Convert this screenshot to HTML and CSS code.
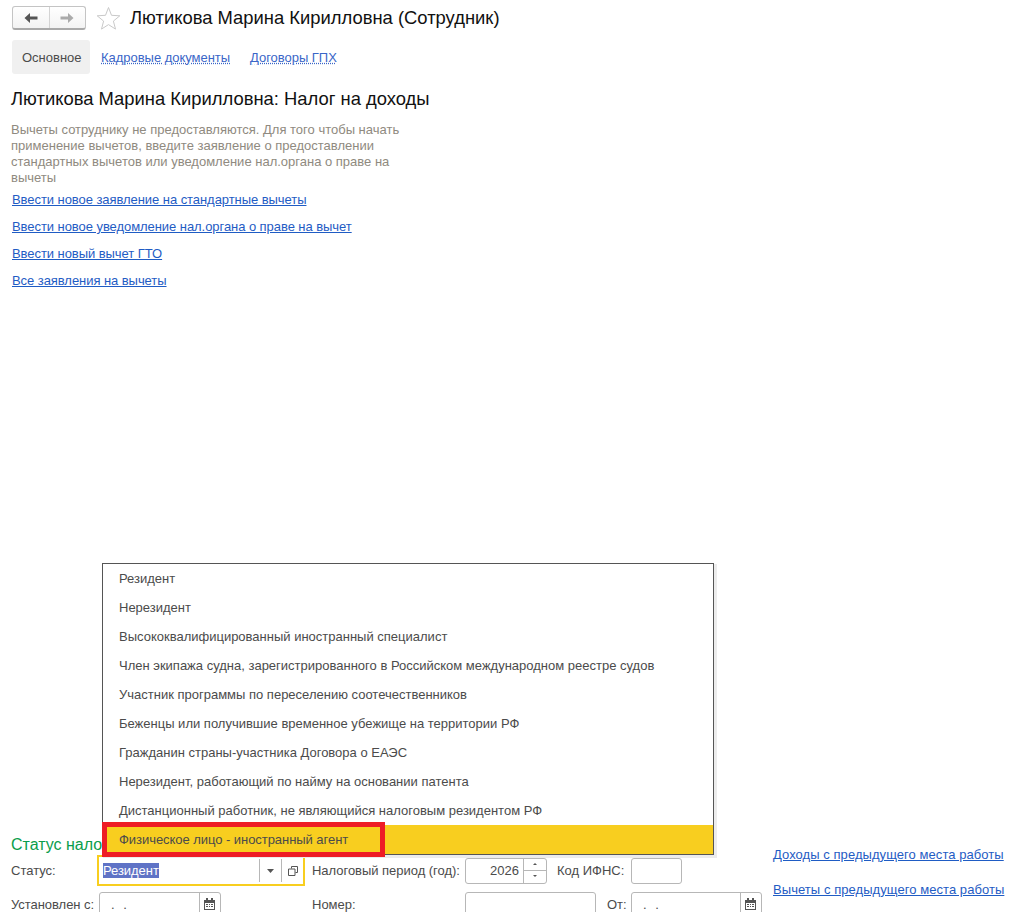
FILE: index.html
```html
<!DOCTYPE html>
<html lang="ru">
<head>
<meta charset="utf-8">
<title>Лютикова Марина Кирилловна (Сотрудник)</title>
<link rel="stylesheet" href="styles.css">
</head>
<body>
<div class="page">
  <header class="head">
    <div class="nav">
      <button class="nav-btn nav-back" type="button" aria-label="Назад">
        <svg width="16" height="12" viewBox="0 0 16 12"><path d="M7 1 1.500 6 7 11V7.500h7.500v-3H7z" fill="#555"/></svg>
      </button>
      <button class="nav-btn" type="button" aria-label="Вперёд">
        <svg width="16" height="12" viewBox="0 0 16 12"><path d="M9 1l5.500 5L9 11V7.500H1.500v-3H9z" fill="#aaa"/></svg>
      </button>
    </div>
    <svg class="star" width="25" height="24" viewBox="0 0 25 24"><path d="M12.500 1.500l3 7.800 8.300.5-6.400 5.300 2.100 8-7-4.500-7 4.500 2.100-8L1.200 9.800l8.300-.5z" fill="#fff" stroke="#c9c9c9"/></svg>
    <h1 class="title">Лютикова Марина Кирилловна (Сотрудник)</h1>
  </header>
  <nav class="tabs">
    <span class="tab tab-active">Основное</span>
    <a class="tab-link" href="#">Кадровые документы</a>
    <a class="tab-link" href="#">Договоры ГПХ</a>
  </nav>
  <h2 class="subtitle">Лютикова Марина Кирилловна: Налог на доходы</h2>
  <p class="hint">Вычеты сотруднику не предоставляются. Для того чтобы начать применение вычетов, введите заявление о предоставлении стандартных вычетов или уведомление нал.органа о праве на вычеты</p>
  <ul class="links">
    <li><a href="#">Ввести новое заявление на стандартные вычеты</a></li>
    <li><a href="#">Ввести новое уведомление нал.органа о праве на вычет</a></li>
    <li><a href="#">Ввести новый вычет ГТО</a></li>
    <li><a href="#">Все заявления на вычеты</a></li>
  </ul>

  <section class="tax">
    <div class="tax-main">
      <h3 class="tax-title">Статус налогоплательщика</h3>
      <div class="row">
        <label class="lbl lbl-status">Статус:</label>
        <div class="field field-status">
          <span class="value"><span class="selected">Резидент</span></span>
          <span class="cell cell-inset">
            <svg width="7" height="4" viewBox="0 0 7 4"><path d="M0 0h7L3.500 4z" fill="#555"/></svg>
          </span>
          <span class="cell cell-inset">
            <svg width="10" height="10" viewBox="0 0 10 10"><path d="M3.500 2.500V.5h6v6h-2M.5 3h6.500v6.500H.5z" fill="none" stroke="#555"/></svg>
          </span>
        </div>
        <label class="lbl lbl-period">Налоговый период (год):</label>
        <div class="field field-year">
          <span class="value value-right">2026</span>
          <span class="spin"><i class="up"></i><i class="down"></i></span>
        </div>
        <label class="lbl lbl-ifns">Код ИФНС:</label>
        <div class="field field-ifns"></div>
      </div>
      <div class="row row-second">
        <label class="lbl lbl-since">Установлен с:</label>
        <div class="field field-date">
          <span class="value value-date">. .</span>
          <span class="cell cell-cal">
            <svg width="11" height="12" viewBox="0 0 11 12"><path d="M0 2h11v10H0z" fill="#555"/><path d="M2 0h2v3H2zM7 0h2v3H7z" fill="#555"/><path d="M1 5h9v6H1z" fill="#fff"/><path d="M2 6h2v1H2zM5 6h1v1H5zM7 6h2v1H7zM2 8h2v1H2zM5 8h1v1H5zM7 8h2v1H7z" fill="#555"/></svg>
          </span>
        </div>
        <label class="lbl lbl-number">Номер:</label>
        <div class="field field-number"></div>
        <label class="lbl lbl-from">От:</label>
        <div class="field field-date-from">
          <span class="value value-date">. .</span>
          <span class="cell cell-cal">
            <svg width="11" height="12" viewBox="0 0 11 12"><path d="M0 2h11v10H0z" fill="#555"/><path d="M2 0h2v3H2zM7 0h2v3H7z" fill="#555"/><path d="M1 5h9v6H1z" fill="#fff"/><path d="M2 6h2v1H2zM5 6h1v1H5zM7 6h2v1H7zM2 8h2v1H2zM5 8h1v1H5zM7 8h2v1H7z" fill="#555"/></svg>
          </span>
        </div>
      </div>
    </div>
    <div class="tax-links">
      <a href="#">Доходы с предыдущего места работы</a>
      <a href="#">Вычеты с предыдущего места работы</a>
    </div>
  </section>

  <ul class="menu">
    <li>Резидент</li>
    <li>Нерезидент</li>
    <li>Высококвалифицированный иностранный специалист</li>
    <li>Член экипажа судна, зарегистрированного в Российском международном реестре судов</li>
    <li>Участник программы по переселению соотечественников</li>
    <li>Беженцы или получившие временное убежище на территории РФ</li>
    <li>Гражданин страны-участника Договора о ЕАЭС</li>
    <li>Нерезидент, работающий по найму на основании патента</li>
    <li>Дистанционный работник, не являющийся налоговым резидентом РФ</li>
    <li class="menu-current">Физическое лицо - иностранный агент</li>
  </ul>
  <div class="callout"></div>
</div>
</body>
</html>
```
FILE: styles.css
```css
* { box-sizing: border-box; }
html, body { margin: 0; padding: 0; background: #fff; }
body { font: 13px/15px "Liberation Sans", Arial, sans-serif; color: #4b4b4b; }
a { color: #1f5cc4; }
.page { position: relative; width: 1017px; height: 912px; overflow: hidden; }

.head { display: flex; align-items: center; padding: 6px 0 0 12px; height: 30px; }
.nav { display: flex; width: 74px; height: 24px; border: 1px solid #c4c4c4; border-bottom: 2px solid #a9a9a9; border-radius: 3px; background: linear-gradient(#fff, #f3f3f3); }
.nav-btn { flex: 1; display: flex; align-items: center; justify-content: center; padding: 0; border: 0; background: none; }
.nav-back { border-right: 1px solid #d4d4d4; }
.star { margin-left: 10px; }
.title { margin: 0 0 0 9px; font-size: 18.400px; font-weight: 400; line-height: 24px; color: #111; white-space: nowrap; }

.tabs { display: flex; align-items: center; margin: 10px 0 0 12px; height: 34px; }
.tab { display: flex; align-items: center; height: 34px; padding: 0 10px; }
.tab-active { width: 78px; background: #f0f0f0; border-radius: 3px; }
.tab-link { margin-left: 11px; margin-right: 9px; color: #3a66c8; text-decoration: underline dotted; letter-spacing: -0.03px; }

.subtitle { margin: 13px 0 0 11px; font-size: 18.400px; font-weight: 400; line-height: 24px; color: #111; }
.hint { width: 392px; margin: 11px 0 0 11px; color: #8f8a80; line-height: 16px; }

.links { list-style: none; margin: 1px 0 0; padding: 0 0 0 12px; }
.links li { height: 27px; padding-top: 5px; }
.links a { letter-spacing: -0.06px; }

.tax { display: flex; margin-top: 540px; padding-left: 11px; }
.tax-main { width: 762px; }
.tax-title { margin: 0; font-size: 16px; font-weight: 400; line-height: 20px; color: #0a9d4b; }
.row { display: flex; align-items: center; height: 31px; }
.row-second { margin-top: 6px; align-items: flex-start; }
.row-second .lbl { line-height: 26px; }
.field { display: flex; height: 26px; border: 1px solid #b7b7b7; border-radius: 3px; background: #fff; }
.value { flex: 1; padding: 0 4px; line-height: 24px; min-width: 0; }
.value-right { text-align: right; }
.value-date { padding-left: 11px; word-spacing: 5px; }
.cell { width: 20px; display: flex; align-items: center; justify-content: center; border-left: 1px solid #b7b7b7; }
.cell-inset { width: 22px; margin: 2px 0; }
.selected { background: #5f73c6; color: #fff; display: inline-block; line-height: 15px; letter-spacing: -0.05px; }

.lbl-status { width: 86px; }
.field-status { width: 208px; height: 31px; border: 2px solid #f8ce1f; border-radius: 0; }
.field-status .value { line-height: 27px; padding-left: 4px; }
.lbl-period { margin-left: 7px; width: 153px; letter-spacing: -0.03px; }
.field-year { width: 82px; }
.spin { width: 23px; display: flex; flex-direction: column; border-left: 1px solid #b7b7b7; }
.spin i { flex: 1; position: relative; }
.spin .up { border-bottom: 1px solid #b7b7b7; }
.up::after, .down::after { content: ""; position: absolute; left: 9px; top: 4px; border: 2px solid transparent; }
.up::after { border-bottom-color: #555; border-top: 0; }
.down::after { border-top-color: #555; border-bottom: 0; }
.lbl-ifns { margin-left: 10px; width: 74px; }
.field-ifns { width: 51px; }

.lbl-since { width: 88px; letter-spacing: -0.05px; }
.field-date { width: 122px; }
.lbl-number { margin-left: 91px; width: 153px; }
.field-number { width: 131px; }
.lbl-from { margin-left: 11px; width: 24px; }
.field-date-from { width: 131px; }
.cell-cal { width: 21px; padding: 5px 1px 0 0; align-items: flex-start; }

.tax-links { display: flex; flex-direction: column; gap: 20px; margin-top: 12px; letter-spacing: 0.06px; }

.menu { position: absolute; left: 102px; top: 563px; width: 612px; margin: 0; padding: 0; list-style: none; background: #fff; border: 1px solid #555; box-shadow: 2px 2px 0 1px #ececec; }
.menu li { height: 29px; padding-left: 16px; line-height: 29px; }
.menu-current { background: #f8ce1f; letter-spacing: -0.05px; }
.callout { position: absolute; left: 102px; top: 822px; width: 283px; height: 35px; border: 5px solid #ee1c25; }
```
